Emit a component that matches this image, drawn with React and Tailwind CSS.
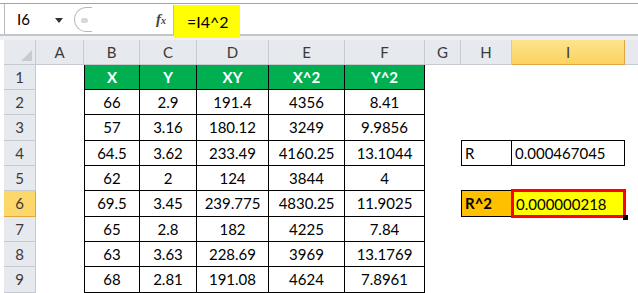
import React from 'react';

const cols = ['A', 'B', 'C', 'D', 'E', 'F', 'G', 'H', 'I'];

const rows = [
  { n: 1, h: 'h-[25px]', d: ['X', 'Y', 'XY', 'X^2', 'Y^2'] },
  { n: 2, h: 'h-[25px]', d: ['66', '2.9', '191.4', '4356', '8.41'] },
  { n: 3, h: 'h-[26px]', d: ['57', '3.16', '180.12', '3249', '9.9856'] },
  { n: 4, h: 'h-[25px]', d: ['64.5', '3.62', '233.49', '4160.25', '13.1044'] },
  { n: 5, h: 'h-[25px]', d: ['62', '2', '124', '3844', '4'] },
  { n: 6, h: 'h-[26px]', d: ['69.5', '3.45', '239.775', '4830.25', '11.9025'] },
  { n: 7, h: 'h-[25px]', d: ['65', '2.8', '182', '4225', '7.84'] },
  { n: 8, h: 'h-[25px]', d: ['63', '3.63', '228.69', '3969', '13.1769'] },
  { n: 9, h: 'h-[26px]', d: ['68', '2.81', '191.08', '4624', '7.8961'] },
  // row 10 only peeks in at the bottom edge
  { n: '', h: 'h-[25px]', d: ['', '', '', '', ''] },
];

const grid = 'grid grid-cols-[32px_48px_56px_57px_72px_76px_80px_36px_51px_113px_1fr]';

const RowHead = ({ n }) => (
  <div
    className={
      'flex items-center justify-center border-r border-b text-[15px] ' +
      (n === 6
        ? 'bg-[#fcd86a] border-[#e2a640] text-[#3a3a3a]'
        : 'bg-[#e6e9ed] border-[#c6cad0] text-[#3a3a3a]')
    }
  >
    {n}
  </div>
);

const DataCell = ({ v, first, head }) => (
  <div
    className={
      'flex items-center justify-center border-r border-b border-black text-[15px] ' +
      (first ? 'border-l ' : '') +
      (head ? 'bg-[#00b050] text-white font-bold' : 'text-black')
    }
  >
    {v}
  </div>
);

const HCell = ({ n }) => {
  if (n === 4)
    return (
      <div className="flex items-center pl-[3px] border border-black text-[15px] text-black -mt-px">R</div>
    );
  if (n === 6)
    return (
      <div className="flex items-center pl-[3px] border border-black bg-[#ffc000] text-[15px] font-bold text-black -mt-px">
        R^2
      </div>
    );
  return <div />;
};

const ICell = ({ n }) => {
  if (n === 4)
    return (
      <div className="flex items-center pl-[3px] border-t border-r border-b border-black text-[15px] text-black -mt-px">
        0.000467045
      </div>
    );
  if (n === 6)
    return (
      <div className="relative flex items-center pl-[4px] bg-[#ffff00] text-[15px] text-black">
        <div className="absolute -top-[2px] -left-[1px] -right-[1px] -bottom-[1px] border-[3px] border-[#ff0000]" />
        <span className="relative">0.000000218</span>
        <div className="absolute -right-[3px] -bottom-[3px] w-[5px] h-[5px] bg-black" />
      </div>
    );
  return <div />;
};

export default function App() {
  return (
    <div className="w-[638px] h-[293px] overflow-hidden bg-white font-['Lato',sans-serif] text-black">
      {/* formula bar */}
      <div className="h-[3px] bg-white" />
      <div className="h-px bg-[#9fa4aa]" />
      <div className="flex h-[32px]">
        <div className="w-[174px] flex items-stretch border-b-2 border-[#c3c7cc]">
          <div className="ml-[4px] w-px bg-[#b9bdc2]" />
          <div className="w-[69px] flex items-center pl-[12px] text-[15px] text-black">
            <span>I6</span>
            <svg className="ml-[25px] mt-[2px]" width="8" height="5" viewBox="0 0 8 5">
              <path d="M0 0 L8 0 L4 5 Z" fill="#333" />
            </svg>
          </div>
          <div className="mt-[3px] mb-[2px] w-[18px] rounded-l-full border-l border-t border-b border-[#b4b8be] relative">
            <div className="absolute left-[6px] top-[10px] w-[7px] h-[5px] rounded-full bg-[#d4d7db]" />
          </div>
          <div className="flex-1 flex items-center justify-end pr-[7px]">
            <span className="font-['Liberation_Serif',serif] italic font-bold text-[15px] text-[#444] leading-none">
              f<span className="text-[10px]">x</span>
            </span>
          </div>
          <div className="w-px bg-[#b9bdc2] mt-[1px]" />
        </div>
        <div className="w-[66px] bg-[#ffff00] flex items-center pl-[13px] mt-[1px] h-[33px] text-[16px] text-black">
          =I4^2
        </div>
        <div className="flex-1 border-b-2 border-[#c3c7cc]" />
      </div>
      <div className="h-[4px] bg-[#eef0f2]" />

      {/* sheet */}
      <div className="ml-[4px]">
        {/* column headers */}
        <div className={grid + ' h-[25px]'}>
          <div className="relative bg-[#e6e9ed] border-r border-b border-[#c6cad0]">
            <svg className="absolute right-[3px] bottom-[3px]" width="11" height="11" viewBox="0 0 11 11">
              <path d="M11 0 L11 11 L0 11 Z" fill="#c8ccd1" />
            </svg>
          </div>
          {cols.map((c) => (
            <div
              key={c}
              className={
                'flex items-center justify-center border-r border-b text-[15px] text-[#3a3a3a] ' +
                (c === 'I'
                  ? 'bg-gradient-to-b from-[#fde38f] to-[#fbd35d] border-[#e2a640]'
                  : 'bg-[#e6e9ed] border-[#c6cad0]')
              }
            >
              {c}
            </div>
          ))}
          <div className="bg-[#e6e9ed] border-b border-[#c6cad0]" />
        </div>

        {rows.map((r, idx) => (
          <div key={idx} className={grid + ' ' + r.h}>
            <RowHead n={r.n} />
            <div />
            {r.d.map((v, i) => (
              <DataCell key={i} v={v} first={i === 0} head={r.n === 1} />
            ))}
            <div />
            <HCell n={r.n} />
            <ICell n={r.n} />
            <div />
          </div>
        ))}
      </div>
    </div>
  );
}
